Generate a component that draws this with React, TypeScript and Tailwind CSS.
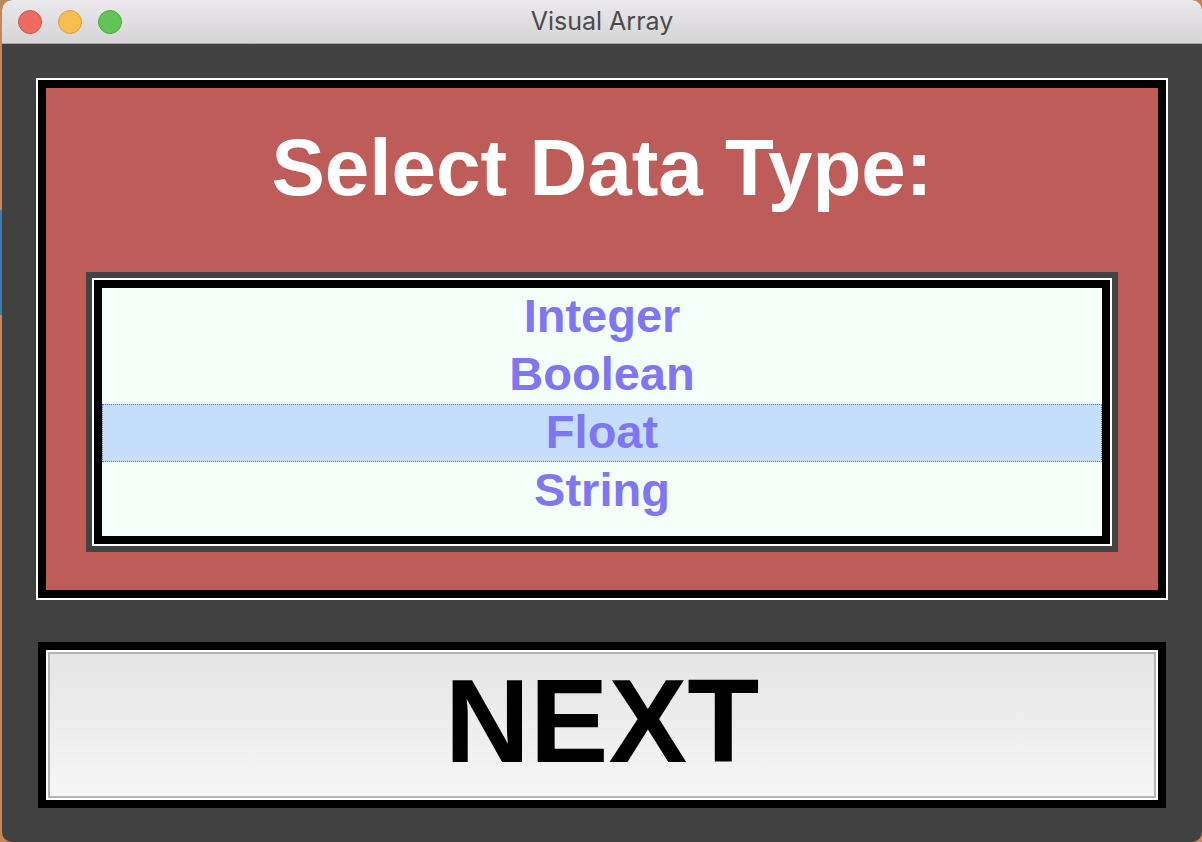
const OPTIONS = ["Integer", "Boolean", "Float", "String"];

function TrafficLights() {
  return (
    <div className="flex items-center gap-4 pl-[16px]">
      <span className="block w-6 h-6 rounded-full bg-[#ee6b60] border border-[#d5544a]" />
      <span className="block w-6 h-6 rounded-full bg-[#f6be50] border border-[#d9a03c]" />
      <span className="block w-6 h-6 rounded-full bg-[#61c454] border border-[#4ea843]" />
    </div>
  );
}

function DataTypeList({ selected }: { selected: string }) {
  return (
    <div className="mx-[40px] border-[6px] border-[#434343]">
      <div className="border-2 border-white">
        <div className="border-8 border-black bg-[#f5fffa] h-[264px] flex flex-col">
          {OPTIONS.map((opt) => {
            const isSel = opt === selected;
            return (
              <div
                key={opt}
                className={`h-[58px] text-center text-[47px] leading-[54px] font-bold text-[#7f76f3] ${
                  isSel ? "bg-[#c5defc] border border-dotted border-[#6b60f5]" : "border border-transparent"
                }`}
              >
                {opt}
              </div>
            );
          })}
        </div>
      </div>
    </div>
  );
}

export default function App() {
  return (
    <div
      className="w-[1202px] h-[842px] flex bg-[#c8855a] overflow-hidden"
      style={{ fontFamily: '"Liberation Sans", Arial, sans-serif' }}
    >
      {/* desktop strip behind the window */}
      <div className="w-[2px] flex flex-col">
        <div className="h-[210px] bg-[#c8855a]" />
        <div className="h-[105px] bg-[#3d7fa6]" />
        <div className="flex-1 bg-[#c8855a]" />
      </div>

      <div className="flex-1 flex flex-col rounded-[10px] overflow-hidden bg-[#414141]">
        {/* title bar */}
        <div className="relative h-[44px] shrink-0 flex items-center bg-gradient-to-b from-[#ebe9eb] to-[#d6d4d6] border-b border-[#a9a9a9]">
          <TrafficLights />
          <div
            className="absolute inset-0 flex items-center justify-center text-[25px] text-[#4b4b4b]"
            style={{ fontFamily: 'Inter, "Liberation Sans", sans-serif' }}
          >
            Visual Array
          </div>
        </div>

        {/* content */}
        <div className="flex-1 flex flex-col px-[34px] pt-[34px]">
          <div className="border-2 border-white">
            <div className="border-8 border-black bg-[#be5c5a] h-[518px] flex flex-col">
              <h1 className="pt-[40px] h-[184px] text-center text-[80px] leading-none font-bold text-white">
                Select Data Type:
              </h1>
              <DataTypeList selected="Float" />
            </div>
          </div>

          <div className="mt-[42px] mx-[2px] border-8 border-black">
            <div className="border-2 border-white">
              <button className="w-full h-[146px] border-2 border-[#b3b3b3] bg-gradient-to-b from-[#e5e5e5] to-[#f6f6f6] flex items-start justify-center pt-[8px]">
                <span className="text-[118px] leading-none font-bold text-black">NEXT</span>
              </button>
            </div>
          </div>
        </div>
      </div>
    </div>
  );
}
